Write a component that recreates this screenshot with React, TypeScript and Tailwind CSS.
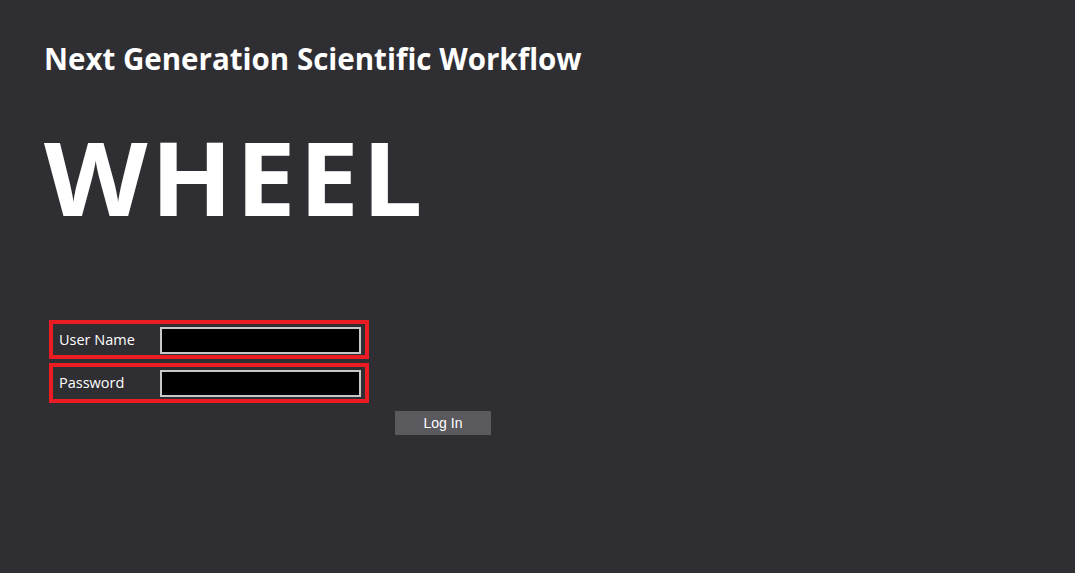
export default function App() {
  return (
    <div
      className="min-h-[573px] w-full bg-[#2f2e33] text-white"
      style={{ fontFamily: '"Open Sans", sans-serif' }}
    >
      <div className="pl-[44px] pt-[41px]">
        <h2 className="text-[29.5px] font-bold leading-[36px]">
          Next Generation Scientific Workflow
        </h2>
        <h1 className="mt-[46px] origin-left scale-x-[1.05] text-[102px] font-bold leading-[108px] tracking-[3px]">
          WHEEL
        </h1>
      </div>

      <form className="ml-[49px] mt-[89px] flex w-[442px] flex-col">
        <div className="flex h-[39px] w-[320px] items-center border-4 border-[#ec1c24] pl-[6px]">
          <label className="w-[101px] text-[14.5px]">User Name</label>
          <input
            type="text"
            className="mt-[1px] h-[27px] w-[201px] border-2 border-[#c8c8c8] bg-black outline-none"
          />
        </div>
        <div className="mt-[4px] flex h-[40px] w-[320px] items-center border-4 border-[#ec1c24] pl-[6px]">
          <label className="w-[101px] text-[14.5px]">Password</label>
          <input
            type="password"
            className="mt-[1px] h-[27px] w-[201px] border-2 border-[#c8c8c8] bg-black outline-none"
          />
        </div>
        <div className="mt-[8px] flex justify-end">
          <button
            type="button"
            className="h-[24px] w-[96px] bg-[#5a595e] font-['Liberation_Sans',Arial,sans-serif] text-[14px] text-white"
          >
            Log In
          </button>
        </div>
      </form>
    </div>
  )
}
